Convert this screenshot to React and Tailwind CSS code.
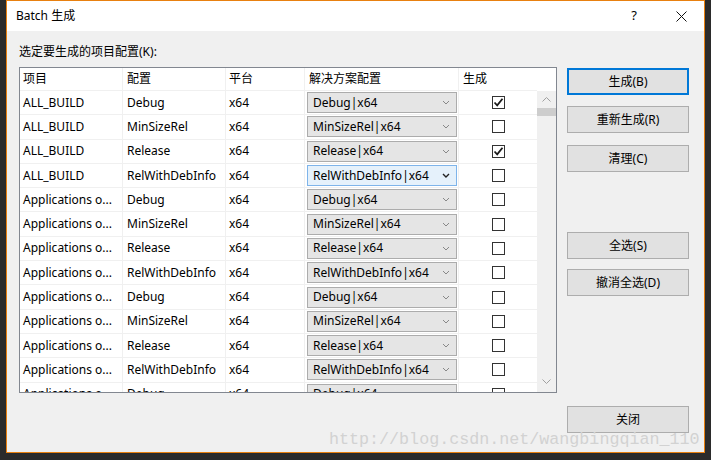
import React from 'react';

const rows = [
  ['ALL_BUILD', 'Debug', true],
  ['ALL_BUILD', 'MinSizeRel', false],
  ['ALL_BUILD', 'Release', true],
  ['ALL_BUILD', 'RelWithDebInfo', false, true],
  ['Applications o...', 'Debug', false],
  ['Applications o...', 'MinSizeRel', false],
  ['Applications o...', 'Release', false],
  ['Applications o...', 'RelWithDebInfo', false],
  ['Applications o...', 'Debug', false],
  ['Applications o...', 'MinSizeRel', false],
  ['Applications o...', 'Release', false],
  ['Applications o...', 'RelWithDebInfo', false],
  ['Applications o...', 'Debug', false],
];

const Chevron = ({ dark }) => (
  <svg width="8" height="5" viewBox="0 0 8 5" className="shrink-0">
    <path d="M1 1 L4 4 L7 1" fill="none" stroke={dark ? '#222' : '#888'} strokeWidth={dark ? 1.4 : 1} />
  </svg>
);

const Checkbox = ({ checked }) => (
  <div className="w-[13px] h-[13px] border border-[#333] bg-white flex items-center justify-center">
    {checked && (
      <svg width="11" height="11" viewBox="0 0 11 11">
        <path d="M1.5 5.5 L4.2 8.3 L9.5 1.8" fill="none" stroke="#1a1a1a" strokeWidth="1.8" />
      </svg>
    )}
  </div>
);

const Button = ({ children, primary, className = '' }) => (
  <div
    className={`h-[27px] w-[122px] flex items-center justify-center bg-[#e1e1e1] text-[12px] text-black ${
      primary ? 'border-2 border-[#0078d7]' : 'border border-[#adadad]'
    } ${className}`}
  >
    {children}
  </div>
);

const cell = 'h-full flex items-center border-r border-[#f0f0f0] shrink-0';

export default function App() {
  return (
    <div
      className="w-[711px] h-[460px] bg-[#2b2b2b] overflow-hidden"
      style={{ fontFamily: '"Noto Sans", "Noto Sans CJK SC", sans-serif' }}
    >
      <div className="relative ml-[6px] w-[699px] h-[453px] border border-[#e8800f] bg-[#f0f0f0] flex flex-col">
        {/* Title bar */}
        <div className="h-[30px] bg-white flex items-center pl-[9px] shrink-0">
          <span className="text-[12px] text-black">Batch 生成</span>
          <span className="ml-auto text-[13px] text-black mr-[39px]">?</span>
          <svg width="11" height="11" viewBox="0 0 11 11" className="mr-[17px]">
            <path d="M0.5 0.5 L10.5 10.5 M10.5 0.5 L0.5 10.5" stroke="#111" strokeWidth="1" />
          </svg>
        </div>

        {/* Body */}
        <div className="flex-1 px-[12px] pt-[13px]">
          <div className="text-[12px] leading-[16px] text-black">选定要生成的项目配置(K):</div>
          <div className="flex mt-[7px] gap-[10px]">
            {/* List */}
            <div className="w-[538px] h-[326px] border border-[#828790] bg-white flex overflow-hidden">
              <div className="w-[517px] shrink-0 text-[12px] text-black">
                <div className="h-[23px] flex border-b border-[#f0f0f0]">
                  <div className={`${cell} w-[103px] pl-[3px] border-[#e5e5e5]`}>项目</div>
                  <div className={`${cell} w-[103px] pl-[4px] border-[#e5e5e5]`}>配置</div>
                  <div className={`${cell} w-[79px] pl-[3px] border-[#e5e5e5]`}>平台</div>
                  <div className={`${cell} w-[154px] pl-[4px] border-[#e5e5e5]`}>解决方案配置</div>
                  <div className={`${cell} w-[78px] pl-[4px] border-r-0`}>生成</div>
                </div>
                {rows.map(([proj, conf, checked, focus], i) => (
                  <div key={i} className="h-[24.3px] flex border-b border-[#f0f0f0] shrink-0">
                    <div className={`${cell} w-[103px] pl-[3px]`}>{proj}</div>
                    <div className={`${cell} w-[103px] pl-[4px]`}>{conf}</div>
                    <div className={`${cell} w-[79px] pl-[3px]`}>x64</div>
                    <div className={`${cell} w-[154px] pl-[2px] pr-[1px]`}>
                      <div
                        className={`w-full h-[21px] flex items-center pl-[5px] pr-[6px] border ${
                          focus ? 'bg-[#e5f1fb] border-[#7eb4ea]' : 'bg-[#e5e5e5] border-[#acacac]'
                        }`}
                      >
                        <span className="flex-1">{conf}|x64</span>
                        <Chevron dark={focus} />
                      </div>
                    </div>
                    <div className={`${cell} w-[78px] justify-center border-r-0`}>
                      <Checkbox checked={checked} />
                    </div>
                  </div>
                ))}
              </div>
              {/* Scrollbar */}
              <div className="flex-1 bg-[#f0f0f0] flex flex-col items-center">
                <div className="h-[23px] w-full bg-white" />
                <div className="h-[17px] flex items-center justify-center">
                  <svg width="9" height="5" viewBox="0 0 9 5">
                    <path d="M0.5 4.5 L4.5 0.5 L8.5 4.5" fill="none" stroke="#a0a0a0" strokeWidth="1" />
                  </svg>
                </div>
                <div className="w-full h-[8px] bg-[#cdcdcd]" />
                <div className="flex-1" />
                <div className="h-[17px] flex items-center justify-center mb-[2px]">
                  <svg width="9" height="5" viewBox="0 0 9 5">
                    <path d="M0.5 0.5 L4.5 4.5 L8.5 0.5" fill="none" stroke="#a0a0a0" strokeWidth="1" />
                  </svg>
                </div>
              </div>
            </div>

            {/* Buttons */}
            <div className="flex flex-col pt-[1px]">
              <Button primary>生成(B)</Button>
              <Button className="mt-[11px]">重新生成(R)</Button>
              <Button className="mt-[12px]">清理(C)</Button>
              <Button className="mt-[60px]">全选(S)</Button>
              <Button className="mt-[10px]">撤消全选(D)</Button>
            </div>
          </div>
          <div className="flex justify-end mt-[13px] pr-[3px]">
            <Button>关闭</Button>
          </div>
        </div>

        {/* Watermark */}
        <div
          className="absolute left-[322px] top-[429px] text-[16.7px] leading-[20px] text-[#d2d2d2] whitespace-nowrap pointer-events-none"
          style={{ fontFamily: '"Liberation Mono", monospace' }}
        >
          http://blog.csdn.net/wangbingqian_110
        </div>
      </div>
    </div>
  );
}
